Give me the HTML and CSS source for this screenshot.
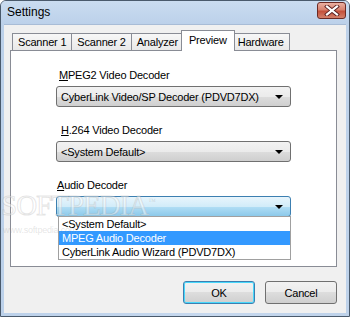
FILE: index.html
```html
<!DOCTYPE html>
<html lang="en">
<head>
    <meta charset="UTF-8">
    <title>Settings</title>
    <link rel="stylesheet" href="styles.css">
</head>
<body>
    <div class="window">
        <div class="titlebar">
            <span class="title">Settings</span>
            <div class="close">
                <svg width="16" height="11" viewBox="0 0 16 11">
                    <path d="M3 1.5 L13 9.5 M13 1.5 L3 9.5" stroke="#5a2020" stroke-width="4" stroke-linecap="square"/>
                    <path d="M3 1.5 L13 9.5 M13 1.5 L3 9.5" stroke="#ffffff" stroke-width="2.2" stroke-linecap="square"/>
                </svg>
            </div>
        </div>

        <div class="client">
            <div class="tabs">
                <div class="tab">Scanner 1</div>
                <div class="tab">Scanner 2</div>
                <div class="tab">Analyzer</div>
                <div class="tab selected">Preview</div>
                <div class="tab">Hardware</div>
            </div>

            <div class="panel">
                <div class="field">
                    <div class="label l1"><u>M</u>PEG2 Video Decoder</div>
                    <div class="combo">
                        <span>CyberLink Video/SP Decoder (PDVD7DX)</span>
                        <span class="arrow"></span>
                    </div>
                </div>
                <div class="field">
                    <div class="label l2"><u>H</u>.264 Video Decoder</div>
                    <div class="combo">
                        <span>&lt;System Default&gt;</span>
                        <span class="arrow"></span>
                    </div>
                </div>
                <div class="field">
                    <div class="label l3"><u>A</u>udio Decoder</div>
                    <div class="combo open">
                        <span></span>
                        <span class="arrow"></span>
                        <div class="dropdown">
                            <div class="item">&lt;System Default&gt;</div>
                            <div class="item active">MPEG Audio Decoder</div>
                            <div class="item">CyberLink Audio Wizard (PDVD7DX)</div>
                        </div>
                    </div>
                </div>
            </div>

            <div class="buttons">
                <div class="btn default">OK</div>
                <div class="btn">Cancel</div>
            </div>
        </div>

        <div class="watermark">SOFTPEDIA<sup>™</sup></div>
        <div class="watermark-url">www.softpedia.com</div>
    </div>
</body>
</html>
```

FILE: styles.css
```css
body {
    margin: 0;
    font-family: "Liberation Sans", Arial, sans-serif;
    font-size: 11px;
    letter-spacing: -0.2px;
    color: #000;
    background: #fff;
}

.window {
    position: relative;
    width: 350px;
    height: 317px;
    box-sizing: border-box;
    border: 1px solid #4a5a6c;
    border-radius: 6px 6px 0 0;
    background: linear-gradient(to right, #bcd1ea, #c6d8ee 60%, #bed2ea);
    padding: 0 3px 3px 3px;
    display: flex;
    flex-direction: column;
    overflow: hidden;
}

.titlebar {
    height: 24px;
    display: flex;
    align-items: center;
    justify-content: space-between;
    background: linear-gradient(#cadcf0, #bcd1ea);
    margin: 0 -3px;
    padding: 0 3px 0 6px;
}

.title {
    font-size: 12px;
    letter-spacing: 0;
    color: #000;
    margin-top: -2px;
}

.close {
    width: 27px;
    height: 15px;
    margin-top: -4px;
    border: 1px solid #6b2a24;
    border-radius: 3px;
    background: linear-gradient(#eab0a2, #d7826f 45%, #c4503a 55%, #d3806a);
    display: flex;
    align-items: center;
    justify-content: center;
}

.client {
    flex: 1;
    background: #f0f0f0;
    padding: 6px 9px 9px 6px;
    border-top: 1px solid #a8bcd6;
    display: flex;
    flex-direction: column;
}

/* tab strip */
.tabs {
    display: flex;
    align-items: flex-end;
    height: 19px;
    padding-left: 2px;
}

.tab {
    height: 16px;
    line-height: 16px;
    padding: 0 5px;
    border: 1px solid #898c95;
    border-bottom: none;
    margin-left: -1px;
    background: linear-gradient(#f7f7f7, #e9e9e9);
}

.tab:first-child {
    margin-left: 0;
}

.tab.selected {
    position: relative;
    z-index: 1;
    height: 20px;
    line-height: 18px;
    margin: 0 -2px -1px -3px;
    padding: 0 7px;
    background: #fff;
}

.panel {
    width: 327px;
    height: 217px;
    box-sizing: border-box;
    border: 1px solid #898c95;
    background: #fff;
    padding: 18px 45px 0 45px;
}

.field {
    margin-bottom: 17px;
}

.label {
    height: 13px;
    line-height: 13px;
    margin-bottom: 4px;
}

.l1 { margin-left: 3px; }
.l2 { margin-left: 5px; }
.l3 { margin-left: 1px; }

.combo {
    position: relative;
    height: 21px;
    box-sizing: border-box;
    border: 1px solid #707070;
    border-radius: 3px;
    background: linear-gradient(#f2f2f2, #ebebeb 50%, #dddddd 50%, #cfcfcf);
    display: flex;
    align-items: center;
    justify-content: space-between;
    padding: 0 7px 0 4px;
}

.arrow {
    width: 0;
    height: 0;
    border-left: 4px solid transparent;
    border-right: 4px solid transparent;
    border-top: 4px solid #000;
}

.combo.open {
    border-color: #3c7fb1;
    background: linear-gradient(#e8f5fc, #d2ecf9 50%, #b2def5 50%, #8cc9ea);
}

.dropdown {
    position: absolute;
    top: 100%;
    left: 1px;
    right: -1px;
    border: 1px solid #a0a0a0;
    background: #fff;
    z-index: 2;
}

.item {
    height: 14px;
    line-height: 14px;
    padding-left: 3px;
    white-space: nowrap;
}

.item.active {
    background: #3399ff;
    color: #fff;
}

/* dialog buttons */
.buttons {
    display: flex;
    justify-content: flex-end;
    gap: 10px;
    margin-top: 14px;
}

.btn {
    width: 72px;
    height: 23px;
    box-sizing: border-box;
    border: 1px solid #707070;
    border-radius: 3px;
    background: linear-gradient(#f2f2f2, #ebebeb 50%, #dddddd 50%, #cfcfcf);
    display: flex;
    align-items: center;
    justify-content: center;
}

.btn.default {
    border-color: #3c7fb1;
    box-shadow: inset 0 0 0 1px #48d8fb;
}

.watermark {
    position: absolute;
    left: 0;
    top: 188px;
    font-family: "Liberation Serif", serif;
    font-size: 29px;
    letter-spacing: -1px;
    color: rgba(255, 255, 255, 0.45);
    -webkit-text-stroke: 1px rgba(150, 150, 150, 0.25);
    pointer-events: none;
    z-index: 3;
}

.watermark sup {
    font-size: 8px;
    -webkit-text-stroke: 0;
    color: rgba(150, 150, 150, 0.3);
}

.watermark-url {
    position: absolute;
    left: 2px;
    top: 224px;
    font-size: 9px;
    color: rgba(150, 150, 150, 0.25);
    z-index: 3;
}
```
